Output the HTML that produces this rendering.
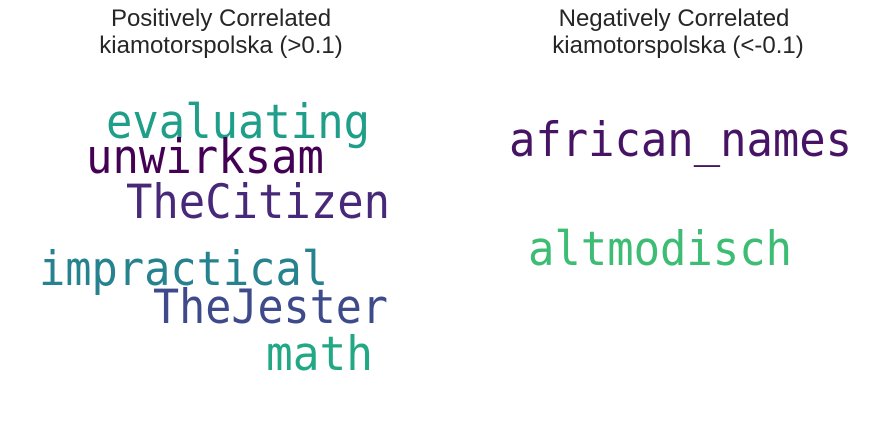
<!DOCTYPE html>
<html><head><meta charset="utf-8"><style>
html,body{margin:0;padding:0;background:#fff;width:884px;height:424px;overflow:hidden}
</style></head><body>
<svg width="884" height="424" xmlns="http://www.w3.org/2000/svg">
<g font-family="Liberation Sans, Arial, sans-serif" font-size="24" fill="#262626" text-anchor="middle">
<text x="221" y="26">Positively Correlated</text>
<text x="221" y="53">kiamotorspolska (&gt;0.1)</text>
<text x="674" y="26">Negatively Correlated</text>
<text x="678" y="53">kiamotorspolska (&lt;-0.1)</text>
</g>
<g font-family="DejaVu Sans Mono, Liberation Mono, monospace" font-size="47">
<text x="106" y="138" fill="#1f9e89" textLength="264" lengthAdjust="spacingAndGlyphs">evaluating</text>
<text x="86" y="173" fill="#440154" textLength="238" lengthAdjust="spacingAndGlyphs">unwirksam</text>
<text x="126" y="218" fill="#482878" textLength="264" lengthAdjust="spacingAndGlyphs">TheCitizen</text>
<text x="39" y="285" fill="#26828e" textLength="289" lengthAdjust="spacingAndGlyphs">impractical</text>
<text x="153" y="323" fill="#3e4a89" textLength="235" lengthAdjust="spacingAndGlyphs">TheJester</text>
<text x="266" y="370" fill="#22a884" textLength="107" lengthAdjust="spacingAndGlyphs">math</text>
<text x="509" y="156" fill="#471365" textLength="343" lengthAdjust="spacingAndGlyphs">african_names</text>
<text x="528" y="265" fill="#3dbc74" textLength="264" lengthAdjust="spacingAndGlyphs">altmodisch</text>
</g>
</svg>
</body></html>
